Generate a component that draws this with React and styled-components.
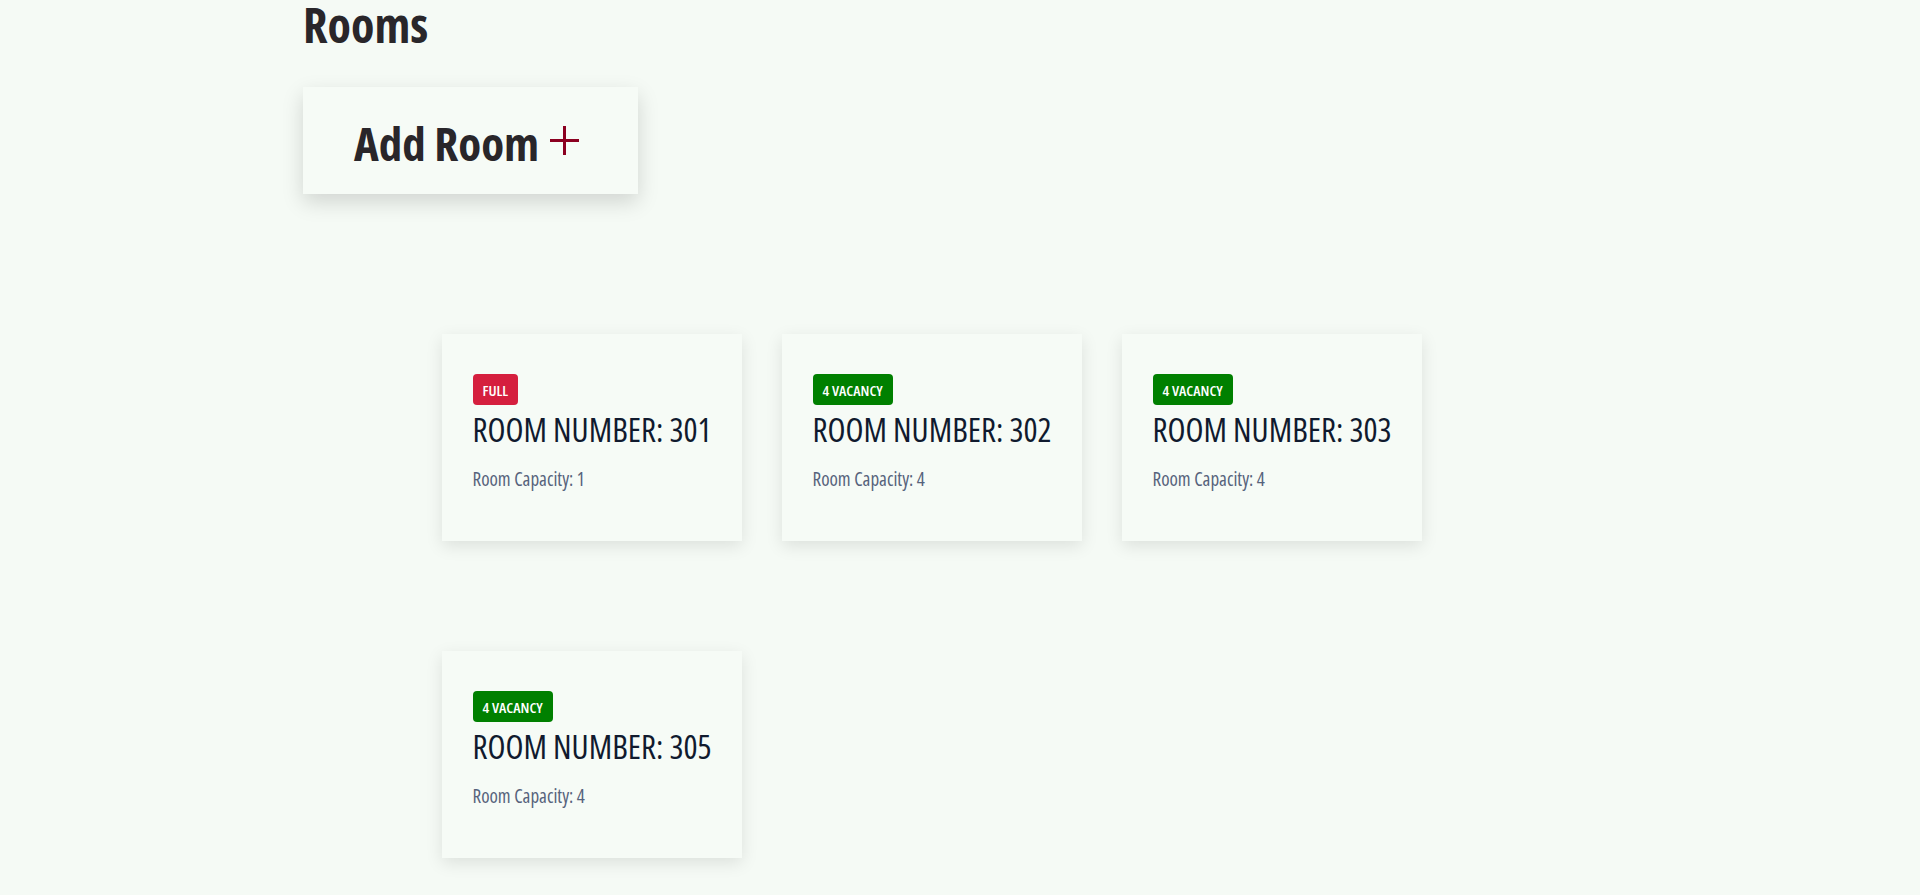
import React, { useLayoutEffect } from "react";
import styled, { createGlobalStyle } from "styled-components";

const GlobalStyle = createGlobalStyle`
  body {
    margin: 0;
    background-color: #f5faf5;
    font-family: "Open Sans", "Roboto Condensed", sans-serif;
    font-stretch: 75%;
  }
`

// the reference keeps a 17px scrollbar gutter on the right
const Page = styled.div`
  padding-right: 17px;
`
const Main = styled.main`
  width: 1297px;
  margin: 0 auto;
  padding: 175px 0 175px;
`
const Title = styled.h1`
  margin: 0;
  font-size: 48px;
  line-height: 60px;
  font-weight: 700;
  color: #29262a;
`
const AddButton = styled.button`
  margin-top: 32px;
  width: 335px;
  height: 107px;
  padding: 4px 0 0 51px;
  display: flex;
  align-items: center;
  gap: 11px;
  border: none;
  background-color: #f6fbf6;
  box-shadow: 0 8px 20px rgba(0, 0, 0, 0.15);
  cursor: pointer;
  font-family: inherit;
  font-stretch: inherit;
  svg {
    margin-top: -4px;
  }
`
const AddLabel = styled.span`
  font-size: 47px;
  line-height: 48px;
  font-weight: 700;
  color: #29262a;
  white-space: nowrap;
`
const Grid = styled.div`
  margin: 140px 0 0 139px;
  display: grid;
  grid-template-columns: repeat(3, 300px);
  column-gap: 40px;
  row-gap: 110px;
`
const Card = styled.div`
  height: 207px;
  box-sizing: border-box;
  padding-top: 40px;
  display: flex;
  justify-content: center;
  background-color: #f6fbf6;
  box-shadow: 0 5px 16px rgba(0, 0, 0, 0.1);
`
const CardBody = styled.div`
  display: flex;
  flex-direction: column;
  align-items: flex-start;
`
const Badge = styled.span`
  height: 31px;
  padding: 0 10px;
  display: flex;
  align-items: center;
  border-radius: 4px;
  background-color: ${(p) => (p.full ? "#d51f3e" : "#008000")};
  color: #ffffff;
  font-size: 15px;
  font-weight: 600;
  text-transform: uppercase;
`
const RoomNumber = styled.h2`
  margin: 5px 0 0;
  font-size: 33px;
  line-height: 40px;
  font-weight: 400;
  color: #101a2e;
  white-space: nowrap;
`
const Capacity = styled.p`
  margin: 17px 0 0;
  font-size: 19px;
  line-height: 24px;
  font-weight: 400;
  color: #56637c;
`

const rooms = [
  { number: 301, capacity: 1, occupied: 1 },
  { number: 302, capacity: 4, occupied: 0 },
  { number: 303, capacity: 4, occupied: 0 },
  { number: 305, capacity: 4, occupied: 0 },
]

const App = () => {
  useLayoutEffect(() => {
    window.scrollTo(0, 180);
  }, []);

  return (
    <Page>
      <GlobalStyle />
      <Main>
        <Title>Rooms</Title>
        <AddButton>
          <AddLabel>Add Room</AddLabel>
          <svg width="29" height="29" viewBox="0 0 29 29">
            <path d="M14.5 0V29M0 14.5H29" stroke="#8b0020" strokeWidth="3" />
          </svg>
        </AddButton>
        <Grid>
          {rooms.map((room) => {
            const free = room.capacity - room.occupied;
            return (
              <Card key={room.number}>
                <CardBody>
                  <Badge full={free === 0}>{free === 0 ? "Full" : `${free} Vacancy`}</Badge>
                  <RoomNumber>ROOM NUMBER: {room.number}</RoomNumber>
                  <Capacity>Room Capacity: {room.capacity}</Capacity>
                </CardBody>
              </Card>
            )
          })}
        </Grid>
      </Main>
    </Page>
  )
};

export default App;
